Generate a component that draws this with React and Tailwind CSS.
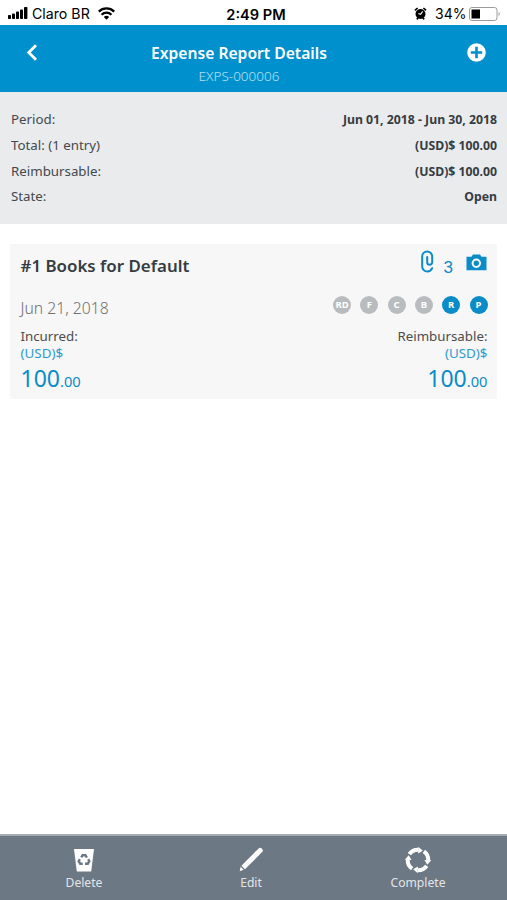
import React from 'react';

const SUMMARY = [
  { label: 'Period:', value: 'Jun 01, 2018 - Jun 30, 2018' },
  { label: 'Total: (1 entry)', value: '(USD)$ 100.00' },
  { label: 'Reimbursable:', value: '(USD)$ 100.00' },
  { label: 'State:', value: 'Open' },
];

const FLAGS = [
  { code: 'RD', active: false },
  { code: 'F', active: false },
  { code: 'C', active: false },
  { code: 'B', active: false },
  { code: 'R', active: true },
  { code: 'P', active: true },
];

const StatusBar = () => (
  <div className="grid h-[25px] grid-cols-[1fr_auto_1fr] items-center pr-[6px] pl-2 pt-[2px] font-['Inter',sans-serif] text-[14px] text-black">
    <div className="flex items-center">
      <svg width="20" height="12" viewBox="0 0 20 12" fill="currentColor">
        <rect x="0" y="8" width="3" height="4" rx="0.8" />
        <rect x="4" y="6.5" width="3" height="5.5" rx="0.8" />
        <rect x="8" y="4.5" width="3" height="7.5" rx="0.8" />
        <rect x="12" y="2.5" width="3" height="9.5" rx="0.8" />
        <rect x="16" y="0" width="3.4" height="12" rx="0.8" />
      </svg>
      <span className="ml-[4px] w-[58px] whitespace-nowrap text-[14.2px]">Claro BR</span>
      <svg className="ml-[8px]" width="17" height="13" viewBox="0 0 17 13" fill="none" stroke="currentColor" strokeWidth="2.3">
        <path d="M0.8 4.6a11 11 0 0 1 15.4 0" />
        <path d="M3.6 7.7a7 7 0 0 1 9.8 0" />
        <path d="M8.5 12.8 5.8 9.9a4 4 0 0 1 5.4 0z" fill="currentColor" stroke="none" />
      </svg>
    </div>
    <span className="pt-[2px] pl-[3px] text-[14.6px] leading-[20px] font-semibold">2:49 PM</span>
    <div className="flex items-center justify-end">
      <svg width="13" height="13" viewBox="0 0 13 13">
        <circle cx="6.5" cy="7" r="5" fill="currentColor" />
        <path d="M0.9 3.4 3.6 1M12.1 3.4 9.4 1M2.8 12.4l1.4-1.6M10.2 12.4 8.8 10.8" stroke="currentColor" strokeWidth="1.6" />
        <path d="M8.7 4.4 6.6 7.3 4.4 6.6" fill="none" stroke="white" strokeWidth="1.1" />
      </svg>
      <span className="ml-[8px] w-[31px] whitespace-nowrap">34%</span>
      <svg className="ml-[3px]" width="32" height="14" viewBox="0 0 32 14">
        <rect x="0.5" y="0.5" width="27.5" height="13" rx="2.5" fill="none" stroke="#9b9b9b" />
        <rect x="2.5" y="2.5" width="8.5" height="9" fill="black" />
        <path d="M29.6 4.8c1.6 0.8 1.6 3.6 0 4.4z" fill="#9b9b9b" />
      </svg>
    </div>
  </div>
);

const Header = () => (
  <header className="grid h-[67px] grid-cols-[46px_1fr_75px] bg-[#0090ce] text-white">
    <button className="flex h-[54px] items-center pl-[26px]" aria-label="Back">
      <svg width="12" height="17" viewBox="0 0 12 17" fill="none" stroke="currentColor" strokeWidth="2.8">
        <path d="M10 1.2 2.7 8.5 10 15.8" />
      </svg>
    </button>
    <div className="flex flex-col items-center pt-[17px]">
      <h1 className="text-[15.65px] leading-[22px] font-semibold">Expense Report Details</h1>
      <p className="mt-[3px] text-[13.5px] leading-[18px] font-light text-[#b5e0f3]">EXPS-000006</p>
    </div>
    <button className="flex h-[54px] items-center justify-end pr-[21px]" aria-label="Add">
      <svg width="19" height="19" viewBox="0 0 19 19">
        <circle cx="9.5" cy="9.5" r="9.3" fill="white" />
        <path d="M9.5 3.8v11.4M3.8 9.5h11.4" stroke="#0090ce" strokeWidth="2.6" />
      </svg>
    </button>
  </header>
);

const Summary = () => (
  <section className="h-[132px] bg-[#e9ebed] pt-[15px] pr-[10px] pl-[11px] text-[#43494d]">
    {SUMMARY.map(({ label, value }) => (
      <div key={label} className="flex h-[25.7px] items-center justify-between">
        <span className="pt-px text-[13.3px]">{label}</span>
        <span className="pt-px text-[12.25px] font-bold text-[#353c42]">{value}</span>
      </div>
    ))}
  </section>
);

const Amount = ({ label, right }) => (
  <div className={right ? 'text-right' : ''}>
    <p className="text-[13.3px] leading-[17px] text-[#4c4c4c]">{label}</p>
    <p className="text-[13.4px] leading-[17px] text-[#2c9bd0]">(USD)$</p>
    <p className="text-[23px] leading-[32px] text-[#0a8cc8]">
      100<span className="text-[14.7px]">.00</span>
    </p>
  </div>
);

const EntryCard = () => (
  <article className="mx-[10px] mt-[20px] h-[155px] bg-[#f7f7f7] pr-[9.5px] pl-[10.5px]">
    <div className="flex h-[43px] items-center justify-between">
      <h2 className="text-[16.9px] font-semibold text-[#353c42]">#1 Books for Default</h2>
      <div className="flex h-full text-[#0a8cc8]">
        <svg className="mt-[6px]" width="15" height="23" viewBox="0 0 15 23" fill="none" stroke="currentColor" strokeWidth="2" strokeLinecap="round">
          <path d="M12.2 18.2C11.200 20.400 9.600 21.600 7.400 21.600A5.100 5.100 0 0 1 2.200 16.500V6.500a5 5 0 0 1 10 0v5.700a2.500 2.500 0 0 1-5 0V7" />
        </svg>
        <span className="mt-[12px] ml-[9px] w-[10px] font-['Liberation_Sans',sans-serif] text-[17px] leading-[24px]">3</span>
        <svg className="mt-[10px] ml-[12px] mr-px" width="21" height="17" viewBox="0 0 21 17">
          <path d="M0.5 2.8h5L7 0.5h7l1.5 2.3h5v13.4h-20z" fill="currentColor" />
          <circle cx="10.3" cy="9.2" r="3.7" fill="none" stroke="white" strokeWidth="2" />
        </svg>
      </div>
    </div>
    <div className="flex h-[41px] justify-between">
      <p className="pt-[9px] text-[15.7px] leading-[24px] font-light text-[#6f6f6f]">Jun 21, 2018</p>
      <div className="flex gap-[9.3px] pt-[9px]">
        {FLAGS.map(({ code, active }) => (
          <span
            key={code}
            className={`flex size-[18px] items-center justify-center rounded-full text-[9.5px] font-bold text-white ${active ? 'bg-[#0a8cc8]' : 'bg-[#b9bcbe]'}`}
          >
            {code}
          </span>
        ))}
      </div>
    </div>
    <div className="flex justify-between">
      <Amount label="Incurred:" />
      <Amount label="Reimbursable:" right />
    </div>
  </article>
);

const DeleteIcon = () => (
  <svg width="26" height="26" viewBox="0 0 26 26">
    <path d="M3 2h20l-2.8 22.500H5.800z" fill="white" />
    <g fill="none" stroke="#6c7883" strokeWidth="2.4">
      <path d="M10.200 10.400 11.600 8.200h2.800l1.500 2.400" />
      <path d="M17.200 12.200l1.100 2-1.500 2.500H14" />
      <path d="M11.700 16.700H9.200l-1.500-2.500 1.200-2" />
    </g>
  </svg>
);

const EditIcon = () => (
  <svg width="26" height="26" viewBox="0 0 26 26">
    <path d="M5.200 20.400 19.600 6" stroke="white" strokeWidth="5" />
    <path d="M19.600 6 22.200 3.400" stroke="white" strokeWidth="5" strokeLinecap="round" />
    <path d="M2.600 19.800l3 3-3.900 1.500z" fill="white" />
  </svg>
);

const CompleteIcon = () => (
  <svg width="26" height="26" viewBox="0 0 26 26">
    {[8, 98, 188, 278].map((angle) => (
      <g key={angle} transform={`rotate(${angle} 13 13)`}>
        <path d="M3.600 8.400A10.500 10.500 0 0 1 12 2.750" fill="none" stroke="white" strokeWidth="4" />
        <path d="M11.500 -0.100l5 3.200-4.300 3.500z" fill="white" />
      </g>
    ))}
  </svg>
);

const ACTIONS = [
  { label: 'Delete', Icon: DeleteIcon },
  { label: 'Edit', Icon: EditIcon },
  { label: 'Complete', Icon: CompleteIcon },
];

const BottomBar = () => (
  <nav className="mt-auto flex h-[66px] justify-between border-t-2 border-[#a4abb2] bg-[#6c7883] pr-[49px] pl-[44px] text-[#e3e6e9]">
    {ACTIONS.map(({ label, Icon }) => (
      <button key={label} className="flex w-[80px] flex-col items-center pt-[11px]">
        <Icon />
        <span className="mt-[1px] text-[12.15px] leading-[17px]">{label}</span>
      </button>
    ))}
  </nav>
);

export default function App() {
  return (
    <div className="flex h-[900px] w-[507px] flex-col overflow-hidden bg-white font-['Noto_Sans',sans-serif]">
      <StatusBar />
      <Header />
      <Summary />
      <EntryCard />
      <BottomBar />
    </div>
  );
}
